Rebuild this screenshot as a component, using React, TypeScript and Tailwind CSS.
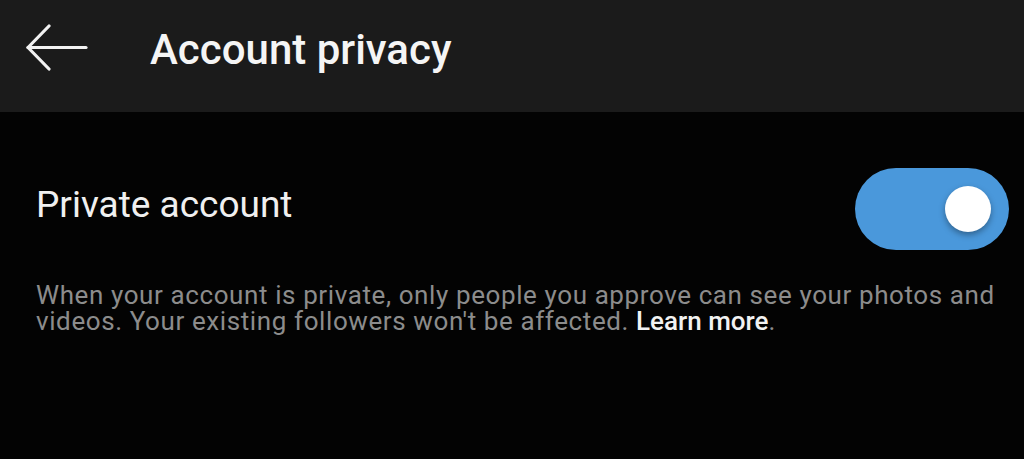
export default function App() {
  return (
    <div className="w-[1024px] h-[459px] bg-[#030303] overflow-hidden" style={{ fontFamily: "Roboto, 'Liberation Sans', sans-serif" }}>
      {/* Header */}
      <div className="h-[112px] bg-[#1b1b1b] flex items-center">
        <button className="w-[150px] h-full flex items-center pl-[26px] pb-[16px]">
          <svg width="62" height="48" viewBox="0 0 62 48" fill="none" stroke="#f2f2f2" strokeWidth="3.2" strokeLinecap="round" strokeLinejoin="round">
            <path d="M2 23.5H60" />
            <path d="M23 2L2 23.5L23 45" />
          </svg>
        </button>
        <h1 className="text-[42px] font-medium text-[#f5f5f5] pb-[14px]">Account privacy</h1>
      </div>

      {/* Private account row */}
      <div className="flex items-center justify-between pl-[36px] pr-[15px] mt-[56px]">
        <span className="text-[37px] text-[#f0f0f0] -mt-[8px]">Private account</span>
        <div className="relative w-[154px] h-[82px] rounded-full bg-[#4a98db]">
          <div className="absolute right-[18px] top-[18px] w-[46px] h-[46px] rounded-full bg-white shadow-[0_3px_6px_rgba(0,0,0,0.35)]" />
        </div>
      </div>

      {/* Description */}
      <p className="w-[1010px] pl-[36px] mt-[32px] text-[26px] tracking-[0.6px] leading-[26px] text-[#8c8c8c]">
        When your account is private, only people you approve can see your photos and videos. Your existing followers won't be affected.{" "}
        <span className="text-[#f2f2f2] font-medium tracking-normal">Learn more</span>.
      </p>
    </div>
  );
}
